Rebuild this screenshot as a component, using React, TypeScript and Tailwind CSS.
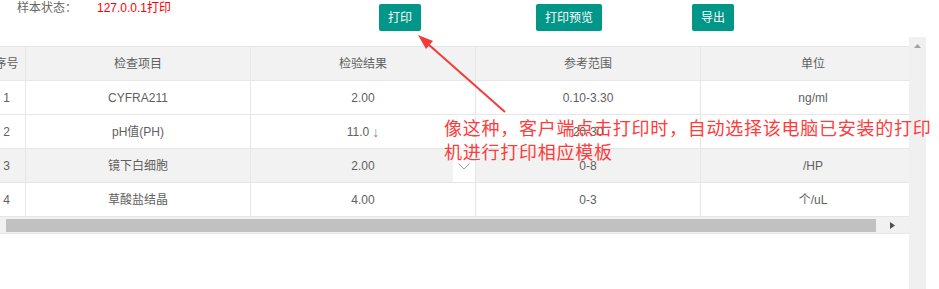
const rows = [
  { no: "1", item: "CYFRA211", result: "2.00", flag: "", range: "0.10-3.30", unit: "ng/ml" },
  { no: "2", item: "pH值(PH)", result: "11.0", flag: "↓", range: "20-30", unit: "" },
  { no: "3", item: "镜下白细胞", result: "2.00", flag: "", range: "0-8", unit: "/HP" },
  { no: "4", item: "草酸盐结晶", result: "4.00", flag: "", range: "0-3", unit: "个/uL" },
];

function Cell({ w, children, className = "" }: { w: string; children?: React.ReactNode; className?: string }) {
  return (
    <div className={`${w} shrink-0 h-full flex items-center justify-center border-r border-[#e6e6e6] ${className}`}>
      {children}
    </div>
  );
}

export default function App() {
  return (
    <div className="relative w-[939px] h-[289px] overflow-hidden bg-white font-['Liberation_Sans','Noto_Sans_CJK_SC',sans-serif] text-[12px] text-[#5f5f5f]">
      {/* toolbar */}
      <div className="flex items-start h-[46px]">
        <span className="w-[97px] pl-[17px] leading-[16px] text-[#666]">样本状态：</span>
        <span className="w-[282px] leading-[16px] text-[#ff0000]">127.0.0.1打印</span>
        <button className="mt-[4px] h-[27px] w-[42px] rounded-[2px] bg-[#009688] text-white">打印</button>
        <button className="ml-[115px] mt-[4px] h-[27px] w-[66px] rounded-[2px] bg-[#009688] text-white">打印预览</button>
        <button className="ml-[90px] mt-[4px] h-[27px] w-[42px] rounded-[2px] bg-[#009688] text-white">导出</button>
      </div>

      <div className="flex">
        <div className="w-[909px]">
          <div className="overflow-hidden border-t border-[#e6e6e6]">
            <div className="-ml-[12px] w-[938px]">
              <div className="flex h-[34px] bg-[#f2f2f2] border-b border-[#e6e6e6]">
                <Cell w="w-[38px]">序号</Cell>
                <Cell w="w-[225px]">检查项目</Cell>
                <Cell w="w-[225px]">检验结果</Cell>
                <Cell w="w-[225px]">参考范围</Cell>
                <Cell w="w-[225px]">单位</Cell>
              </div>
              {rows.map((r) => (
                <div
                  key={r.no}
                  className={`flex h-[34px] border-b border-[#e6e6e6] ${r.no === "3" ? "bg-[#f2f2f2]" : "bg-white"}`}
                >
                  <Cell w="w-[38px]">{r.no}</Cell>
                  <Cell w="w-[225px]">{r.item}</Cell>
                  <Cell w="w-[225px]" className="relative">
                    {r.result}
                    {r.flag && <span className="ml-[3px] text-[14px] leading-none text-[#888]">{r.flag}</span>}
                    {r.no === "3" && (
                      <div className="absolute right-0 top-0 bottom-0 w-[22px] bg-white flex items-center justify-center pt-[2px]">
                        <svg width="12" height="7" viewBox="0 0 12 7" fill="none">
                          <polyline points="0.5,0.5 6,6 11.5,0.5" stroke="#9a9a9a" strokeWidth="1" />
                        </svg>
                      </div>
                    )}
                  </Cell>
                  <Cell w="w-[225px]">{r.range}</Cell>
                  <Cell w="w-[225px]">{r.unit}</Cell>
                </div>
              ))}
            </div>
          </div>
          {/* horizontal scrollbar */}
          <div className="flex items-center h-[17px] bg-[#f1f1f1] border-b border-[#e8e8e8]">
            <div className="ml-[6px] w-[870px] h-[13px] bg-[#c1c1c1]" />
            <div className="flex-1 flex items-center justify-center">
              <svg width="5" height="7" viewBox="0 0 5 7">
                <polygon points="0,0 5,3.5 0,7" fill="#505050" />
              </svg>
            </div>
          </div>
        </div>
        {/* vertical scrollbar */}
        <div className="-mt-[9px] w-[17px] h-[252px] bg-[#f0f0f0] flex justify-center pt-[7px]">
          <svg width="7" height="4" viewBox="0 0 7 4">
            <polygon points="0,4 3.5,0 7,4" fill="#a3a3a3" />
          </svg>
        </div>
      </div>

      {/* annotation */}
      <svg className="absolute left-0 top-0 pointer-events-none" width="939" height="289">
        <line x1="505" y1="112" x2="428" y2="44" stroke="#f33b3b" strokeWidth="2" />
        <polygon points="418,35 433,41 426,49" fill="#f33b3b" />
      </svg>
      <div className="absolute left-[444px] top-[115px] whitespace-nowrap font-['Noto_Sans_CJK_SC',sans-serif] text-[18px] leading-[24px] tracking-[0.75px] text-[#ff3b3b]">
        像这种，客户端点击打印时，自动选择该电脑已安装的打印
        <br />
        机进行打印相应模板
      </div>
    </div>
  );
}
